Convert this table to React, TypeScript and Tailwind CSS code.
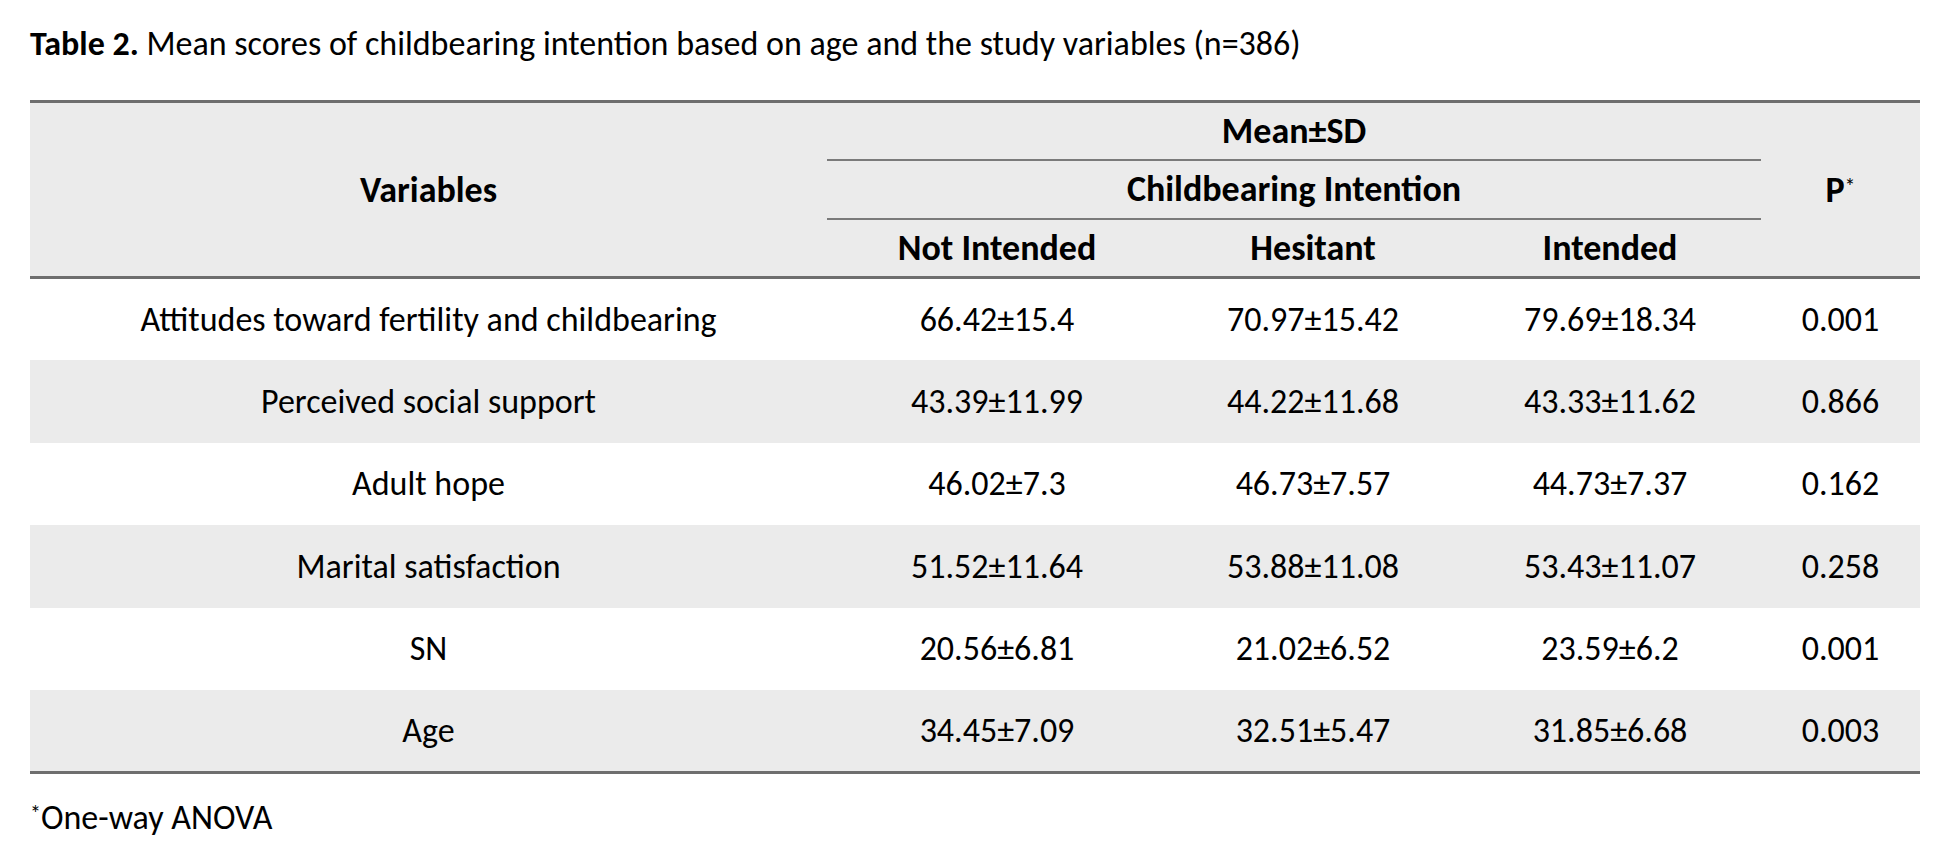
const rows = [
  { name: 'Attitudes toward fertility and childbearing', a: '66.42±15.4', b: '70.97±15.42', c: '79.69±18.34', p: '0.001' },
  { name: 'Perceived social support', a: '43.39±11.99', b: '44.22±11.68', c: '43.33±11.62', p: '0.866' },
  { name: 'Adult hope', a: '46.02±7.3', b: '46.73±7.57', c: '44.73±7.37', p: '0.162' },
  { name: 'Marital satisfaction', a: '51.52±11.64', b: '53.88±11.08', c: '53.43±11.07', p: '0.258' },
  { name: 'SN', a: '20.56±6.81', b: '21.02±6.52', c: '23.59±6.2', p: '0.001' },
  { name: 'Age', a: '34.45±7.09', b: '32.51±5.47', c: '31.85±6.68', p: '0.003' },
];

export default function App() {
  return (
    <div className="min-h-screen bg-white px-[30px] pt-[24px] text-black" style={{ fontFamily: 'Carlito, Lato, "Liberation Sans", sans-serif' }}>
      {/* Caption */}
      <p className="h-[76px] text-[34px] leading-[40px] whitespace-nowrap">
        <span className="font-bold">Table 2.</span> Mean scores of childbearing intention based on age and the study variables (n=386)
      </p>

      <table className="w-[1890px] table-fixed border-collapse text-[34px]">
        <colgroup>
          <col className="w-[797px]" />
          <col className="w-[340px]" />
          <col className="w-[292px]" />
          <col className="w-[302px]" />
          <col className="w-[159px]" />
        </colgroup>
        <thead className="bg-[#ebebeb] text-[36px]">
          <tr className="h-[58px] border-t-[3px] border-[#6e6e6e]">
            <th rowSpan={3} className="font-bold">Variables</th>
            <th colSpan={3} className="font-bold">Mean±SD</th>
            <th rowSpan={3} className="font-bold">
              P<span className="text-[22px] align-[8px] font-normal leading-none">*</span>
            </th>
          </tr>
          <tr className="h-[59px]">
            <th colSpan={3} className="border-t-2 border-[#7a7a7a] font-bold">Childbearing Intention</th>
          </tr>
          <tr className="h-[59px] border-b-[3px] border-[#6e6e6e]">
            <th className="border-t-2 border-[#7a7a7a] font-bold">Not Intended</th>
            <th className="border-t-2 border-[#7a7a7a] font-bold">Hesitant</th>
            <th className="border-t-2 border-[#7a7a7a] font-bold">Intended</th>
          </tr>
        </thead>
        <tbody className="font-normal">
          {rows.map((r, i) => (
            <tr
              key={r.name}
              className={`h-[82.5px] text-center ${i % 2 === 1 ? 'bg-[#ebebeb]' : 'bg-white'} ${i === rows.length - 1 ? 'border-b-[3px] border-[#6e6e6e]' : ''}`}
            >
              <td>{r.name}</td>
              <td>{r.a}</td>
              <td>{r.b}</td>
              <td>{r.c}</td>
              <td>{r.p}</td>
            </tr>
          ))}
        </tbody>
      </table>

      {/* Footnote */}
      <p className="mt-[24px] text-[34px] leading-[40px]">
        <span className="text-[22px] align-[8px] leading-none">*</span>One-way ANOVA
      </p>
    </div>
  );
}
